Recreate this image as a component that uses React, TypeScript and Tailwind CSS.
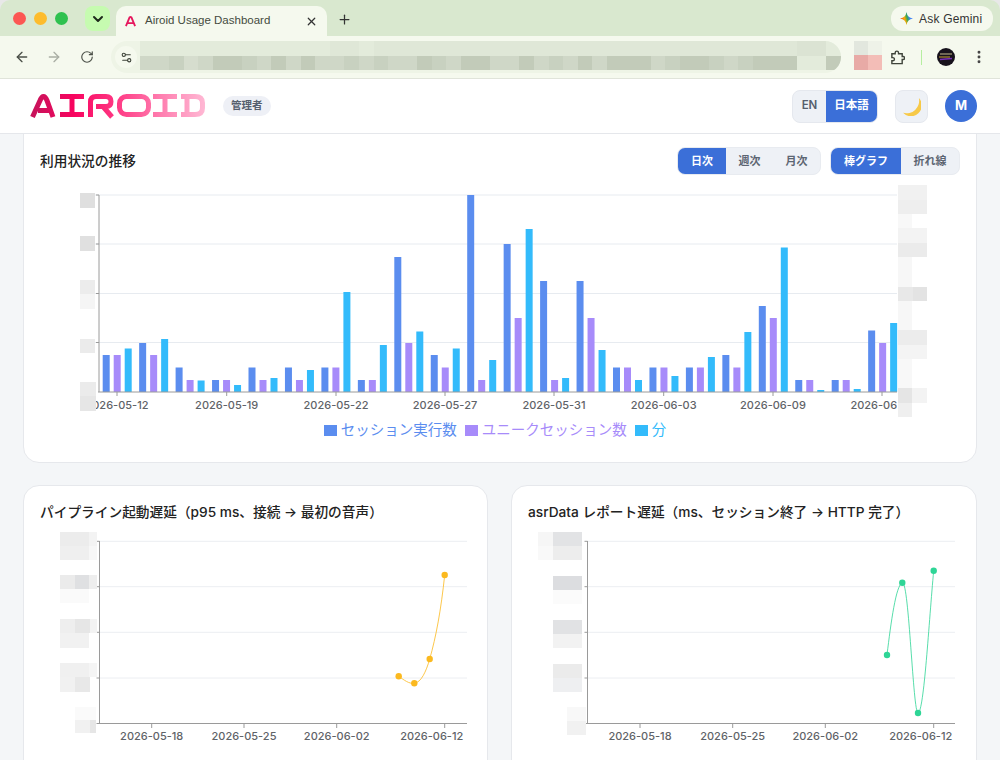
import { ArrowLeft, ArrowRight, ChevronDown, EllipsisVertical, Plus, RotateCw, Settings2, X } from 'lucide-react';

const BLUE = '#5b8def';
const PURPLE = '#a78bfa';
const CYAN = '#33bbfb';

// bar tops in page pixels: [sessions, unique, minutes]
const barTops = [
  [355, 355, 348.5], [343, 355, 339], [367.5, 380, 380.5], [380, 380, 385], [367.5, 380, 378],
  [367.5, 380, 370], [367.5, 367.5, 292], [380, 380, 345], [257, 343, 331.5], [355, 367.5, 348.5],
  [195, 380, 360], [244, 318, 229], [281, 380, 378], [281, 318, 350], [367.5, 367.5, 380],
  [367.5, 367.5, 376], [367.5, 367.5, 357], [355, 367.5, 332], [306, 318, 247.5], [380, 380, 390],
  [380, 380, 389], [330.5, 343, 323],
];

const mainTicks = [
  [117, '2026-05-12'], [226.7, '2026-05-19'], [336, '2026-05-22'], [445, '2026-05-27'],
  [554, '2026-05-31'], [663.7, '2026-06-03'], [773, '2026-06-09'], [882, '2026-06-12'],
] as const;

const urlTop = 'eeeeeeeeeeeeeddedddddddddddddddddddddddddddddcce';
const urlBottom = 'aa9ba889a8a8aa9a9aa89a88aa8a9a8a888a9889a9888ee8e';

const shade: Record<string, string> = {
  '8': '#c2cbb9', '9': '#c8d1c0', a: '#cfd7c7', b: '#d6ddce', c: '#dbe3d3', d: '#dfe7d7', e: '#e3ebdb',
};

type Cell = [number, number, number, number, string];

function Mosaic({ cells }: { cells: Cell[] }) {
  return (
    <g>
      {cells.map(([x, y, w, h, fill], i) => (
        <rect key={i} x={x} y={y} width={w} height={h} fill={fill} />
      ))}
    </g>
  );
}

const mainLeftBlur: Cell[] = [
  [80, 193, 15, 15, '#dfdfdf'], [80, 236, 15, 15, '#e0e0e0'], [80, 280, 15, 14, '#ececec'], [80, 294, 15, 15, '#f5f5f5'],
  [80, 339, 15, 14, '#ebebeb'], [80, 382, 16, 14, '#ebebeb'], [80, 396, 16, 15, '#e6e6e6'],
];

const mainRightBlur: Cell[] = [
  [898, 185, 29, 15, '#f1f1f1'], [898, 200, 29, 14, '#eeeeee'], [898, 214, 14, 14, '#f8f8f8'],
  [898, 228, 29, 15, '#f3f3f3'], [898, 243, 29, 14, '#ebebeb'], [898, 257, 14, 30, '#f7f7f7'],
  [898, 287, 15, 14, '#e8e8e8'], [913, 287, 14, 14, '#e3e3e3'], [898, 301, 14, 29, '#f7f7f7'],
  [898, 330, 29, 15, '#ececec'], [898, 345, 29, 14, '#f4f4f4'], [898, 359, 14, 29, '#f8f8f8'],
  [898, 388, 14, 15, '#e5e5e5'], [912, 388, 15, 15, '#f3f3f3'], [898, 403, 14, 14, '#efefef'],
];

const leftBlur: Cell[] = [
  [60, 532, 29, 14, '#ececec'], [89, 532, 8, 14, '#f3f3f3'], [60, 546, 29, 14, '#efefef'], [89, 546, 8, 14, '#f7f7f7'],
  [60, 575, 15, 14, '#ebebeb'], [75, 575, 14, 14, '#dfe0e2'], [89, 575, 8, 14, '#eeeeee'], [60, 589, 29, 14, '#fafafa'],
  [60, 619, 15, 14, '#eeeeee'], [75, 619, 15, 14, '#e6e6e6'], [90, 619, 7, 14, '#f3f3f3'], [60, 633, 29, 15, '#f1f1f1'],
  [60, 663, 29, 14, '#f0f0f0'], [89, 663, 8, 14, '#f5f5f5'], [60, 677, 15, 15, '#f1f1f1'], [75, 677, 15, 15, '#e8e8e8'],
  [75, 707, 21, 13, '#fafafa'], [75, 720, 15, 13, '#f1f1f1'], [90, 720, 6, 13, '#e6e6e6'],
];

const rightBlur: Cell[] = [
  [538, 532, 15, 14, '#f6f6f6'], [553, 532, 29, 14, '#e2e3e5'], [538, 546, 15, 14, '#f9f9f9'], [553, 546, 29, 14, '#ededed'],
  [553, 576, 29, 14, '#dcdde0'], [553, 590, 29, 14, '#fbfbfb'],
  [553, 620, 29, 14, '#e1e2e4'], [553, 634, 29, 14, '#f2f2f2'],
  [553, 664, 29, 14, '#ebebeb'], [553, 678, 29, 14, '#eeeff1'],
  [567, 707, 19, 14, '#f8f8f8'], [567, 721, 19, 14, '#f1f1f1'],
];

function MainChart() {
  return (
    <svg viewBox="24 180 952 240" className="block w-[952px] h-[240px]">
      {[195, 244, 293.5, 342.5].map((y) => (
        <line key={y} x1={95} x2={897} y1={y} y2={y} stroke="#e7ebf0" strokeWidth={1} />
      ))}
      {barTops.map((tops, i) => {
        const x = 102.7 + i * 36.45;
        return (
          <g key={i}>
            <rect x={x} y={tops[0]} width={7} height={392 - tops[0]} fill={BLUE} />
            <rect x={x + 11} y={tops[1]} width={7} height={392 - tops[1]} fill={PURPLE} />
            <rect x={x + 22} y={tops[2]} width={7} height={392 - tops[2]} fill={CYAN} />
          </g>
        );
      })}
      <line x1={99} x2={99} y1={195} y2={392} stroke="#9a9a9a" strokeWidth={1} />
      <line x1={98} x2={897} y1={392} y2={392} stroke="#9a9a9a" strokeWidth={1} />
      {[195, 244, 293.5, 342.5].map((y) => (
        <line key={y} x1={96} x2={99} y1={y} y2={y} stroke="#9a9a9a" strokeWidth={1} />
      ))}
      {mainTicks.map(([x, label]) => (
        <g key={label}>
          <line x1={x} x2={x} y1={392} y2={396} stroke="#9a9a9a" strokeWidth={1} />
          <text x={x} y={408.5} textAnchor="middle" fontSize={11} fontWeight={500} fill="#5f6368">
            {label}
          </text>
        </g>
      ))}
      <rect x={897} y={392} width={60} height={28} fill="#fff" />
      <Mosaic cells={mainLeftBlur} />
      <Mosaic cells={mainRightBlur} />
    </svg>
  );
}

interface LineChartProps {
  x0: number;
  ticks: readonly (readonly [number, string])[];
  points: readonly (readonly [number, number])[];
  path: string;
  color: string;
  blur: Cell[];
}

function LineChart({ x0, ticks, points, path, color, blur }: LineChartProps) {
  const axis = x0 + 75.5;
  const end = x0 + 443;
  return (
    <svg viewBox={`${x0} 530 464 230`} className="block w-[464px] h-[230px]">
      {[541.3, 586.7, 632.3, 678].map((y) => (
        <g key={y}>
          <line x1={axis} x2={end} y1={y} y2={y} stroke="#eceef2" strokeWidth={1} />
          <line x1={axis - 3} x2={axis} y1={y} y2={y} stroke="#9a9a9a" strokeWidth={1} />
        </g>
      ))}
      <line x1={axis} x2={axis} y1={541} y2={723.5} stroke="#9a9a9a" strokeWidth={1} />
      <line x1={axis - 3} x2={end} y1={723.5} y2={723.5} stroke="#9a9a9a" strokeWidth={1} />
      {ticks.map(([x, label], i) => (
        <g key={label}>
          <line x1={x} x2={x} y1={723.5} y2={728} stroke="#9a9a9a" strokeWidth={1} />
          <text x={i === ticks.length - 1 ? x - 13 : x} y={739.5} textAnchor="middle" fontSize={11} fontWeight={500} fill="#5f6368">
            {label}
          </text>
        </g>
      ))}
      <path d={path} fill="none" stroke={color} strokeOpacity={0.8} strokeWidth={1} />
      {points.map(([x, y]) => (
        <circle key={x} cx={x} cy={y} r={3.2} fill={color} />
      ))}
      <Mosaic cells={blur} />
    </svg>
  );
}

function Logo() {
  return (
    <svg viewBox="30 94 176 26" className="w-[176px] h-[26px]">
      <defs>
        <linearGradient id="logo" gradientUnits="userSpaceOnUse" x1={30} y1={0} x2={205} y2={0}>
          <stop offset="0" stopColor="#c4145a" />
          <stop offset="0.25" stopColor="#f8045f" />
          <stop offset="0.5" stopColor="#ff3a85" />
          <stop offset="0.75" stopColor="#ff7fb0" />
          <stop offset="1" stopColor="#ffb8d4" />
        </linearGradient>
      </defs>
      <g fill="none" stroke="url(#logo)" strokeWidth={5}>
        <path d="M32.5 118 L40 101.5 Q41.5 97.5 43.5 97.5 Q45.5 97.5 47 101.5 L53 118 M38 111.5 H50" />
        <path d="M60 97.5 H84 M60 115.5 H84 M72 97.5 V115.5" />
        <path d="M90.5 118 V103 Q90.5 97.5 96 97.5 H106 Q111 97.5 111 102.5 Q111 107.5 106 107.5 H96 M103 107.5 L112 118" />
        <rect x={119.5} y={97.5} width={29} height={18} rx={7} />
        <path d="M153 97.5 H177 M153 115.5 H177 M165 97.5 V115.5" />
        <path d="M181 97.5 H195 Q202.5 97.5 202.5 104 V109 Q202.5 115.5 195 115.5 H181 M187 97.5 V115.5" />
      </g>
    </svg>
  );
}

function BrowserChrome() {
  return (
    <div className="shrink-0 font-['Liberation_Sans',sans-serif]">
      <div className="h-9 bg-[#d9e8cf] flex items-end rounded-t-[10px]">
        <div className="flex items-center gap-2 h-9 pl-[13px] w-[85px]">
          <span className="w-[13px] h-[13px] rounded-full bg-[#fc5753]" />
          <span className="w-[13px] h-[13px] rounded-full bg-[#fdbc2c]" />
          <span className="w-[13px] h-[13px] rounded-full bg-[#2fc14f]" />
        </div>
        <div className="w-[25px] h-[25px] mb-[5px] rounded-lg bg-[#c6fbb0] flex items-center justify-center">
          <ChevronDown className="w-4 h-4 text-[#1f2a1c]" strokeWidth={3} />
        </div>
        <div className="ml-[6px] w-[211px] h-[30px] rounded-t-[10px] bg-[#f5f9ee] flex items-center pl-[9px] pr-[9px]">
          <svg viewBox="0 0 12 12" className="w-[11px] h-[11px] shrink-0">
            <path d="M1 11 L5 1.5 Q6 0.5 7 1.5 L11 11 M3.5 7.8 H8.5" fill="none" stroke="#e5185d" strokeWidth={2} />
          </svg>
          <span className="ml-[9px] text-[11.5px] text-[#444b40] whitespace-nowrap">Airoid Usage Dashboard</span>
          <X className="w-[13px] h-[13px] ml-auto text-[#333]" strokeWidth={2.2} />
        </div>
        <Plus className="w-[15px] h-[15px] ml-[10px] mb-[9px] text-[#333]" strokeWidth={2} />
        <div className="ml-auto mr-[7px] mb-[5px] w-[102px] h-[25px] rounded-xl bg-[#f5f9ee] flex items-center pl-[9px] gap-[6px]">
          <svg viewBox="0 0 16 16" className="w-[13px] h-[13px] shrink-0">
            <defs>
              <linearGradient id="gem" x1="0" y1="0.6" x2="1" y2="0.3">
                <stop offset="0" stopColor="#ea4335" />
                <stop offset="0.35" stopColor="#f9ab00" />
                <stop offset="0.55" stopColor="#34a853" />
                <stop offset="0.72" stopColor="#4285f4" />
              </linearGradient>
            </defs>
            <path d="M8 0 Q9 7 16 8 Q9 9 8 16 Q7 9 0 8 Q7 7 8 0Z" fill="url(#gem)" />
          </svg>
          <span className="text-[12px] tracking-[0.2px] text-[#333] whitespace-nowrap">Ask Gemini</span>
        </div>
      </div>
      <div className="h-[43px] bg-[#f5f9ee] border-b border-[#e0e4da] flex items-center">
        <ArrowLeft className="w-4 h-4 ml-[14px] text-[#4b5048]" />
        <ArrowRight className="w-4 h-4 ml-4 text-[#a9aea4]" />
        <RotateCw className="w-[14px] h-[14px] ml-[18px] text-[#4b5048]" />
        <div className="ml-[17px] h-[32px] w-[730px] rounded-full bg-[#eef4e6] flex items-start pl-[4px] overflow-hidden">
          <div className="mt-[5px] w-[22px] h-[22px] rounded-full bg-[#f5f9ee] flex items-center justify-center shrink-0">
            <Settings2 className="w-[13px] h-[13px] text-[#3c4238]" />
          </div>
          <div className="ml-[3px] flex flex-col">
            {[urlTop, urlBottom].map((row, r) => (
              <div key={r} className="flex h-[14.5px]">
                {row.split('').map((c, i) => (
                  <span key={i} className="w-[14.6px] h-full" style={{ backgroundColor: shade[c] }} />
                ))}
              </div>
            ))}
          </div>
        </div>
        <div className="ml-[13px] mb-[4px] grid grid-cols-2 w-[28px] h-[29px]">
          <span className="bg-[#e2e7de]" />
          <span className="bg-[#eef2e8]" />
          <span className="bg-[#e8aaa6]" />
          <span className="bg-[#f3bdb7]" />
        </div>
        <svg viewBox="0 0 16 16" className="w-[15px] h-[15px] ml-[8px]">
          <path
            d="M2 4 H5.5 V3 a1.8 1.8 0 0 1 3.6 0 V4 H13 V7 H14 a1.6 1.6 0 0 1 0 3.2 H13 V14.5 H2 V11.5 H3 a1.7 1.7 0 0 0 0-3.4 H2 Z"
            fill="none"
            stroke="#3f443b"
            strokeWidth={1.5}
          />
        </svg>
        <span className="ml-[16px] w-[1px] h-[15px] bg-[#b6eea0]" />
        <svg viewBox="0 0 18 18" className="ml-[15px] w-[18px] h-[18px]">
          <circle cx={9} cy={9} r={9} fill="#17121c" />
          <path d="M3 6 H15" stroke="#8c8468" strokeWidth={1.5} />
          <path d="M2 9 H13" stroke="#c9a23a" strokeWidth={1} />
          <path d="M3 11.5 L15 10.5" stroke="#7a2fb8" strokeWidth={1.5} />
        </svg>
        <EllipsisVertical className="w-4 h-4 ml-[16px] text-[#444]" strokeWidth={2.4} />
      </div>
    </div>
  );
}

function AppHeader() {
  return (
    <header className="relative z-10 shrink-0 h-[55px] bg-white border-b border-[#e5e7eb] flex items-center pl-[30px] pr-[23px]">
      <Logo />
      <span className="ml-[17px] h-5 px-[8px] rounded-full bg-[#eef0f6] text-[10.5px] font-semibold text-[#55606e] flex items-center">管理者</span>
      <div className="ml-auto flex h-[33px] rounded-lg border border-[#e5e8ee] bg-[#eef1f6] overflow-hidden text-[11.5px] font-semibold">
        <span className="w-[33px] flex items-center justify-center text-[#555e6c]">EN</span>
        <span className="w-[51px] flex items-center justify-center bg-[#3b6fd8] text-white">日本語</span>
      </div>
      <div className="ml-[17px] w-[33px] h-[33px] rounded-lg border border-[#e5e8ee] bg-[#eef1f6] flex items-center justify-center">
        <svg viewBox="0 0 18 18" className="w-[19px] h-[19px]">
          <path d="M16 1 A10 10 0 0 1 1 15 A12 12 0 0 0 16 1Z" fill="#f7c948" />
        </svg>
      </div>
      <div className="ml-[17px] w-8 h-8 rounded-full bg-[#3b6fd8] text-white text-[13px] font-bold flex items-center justify-center">M</div>
    </header>
  );
}

function Segmented({ items, widths }: { items: string[]; widths: string[] }) {
  return (
    <div className="flex h-[28px] rounded-lg border border-[#e8ebf0] bg-[#eef1f6] overflow-hidden text-[11px] font-semibold">
      {items.map((item, i) => (
        <span
          key={item}
          className={`${widths[i]} flex items-center justify-center ${i === 0 ? 'bg-[#3b6fd8] text-white' : 'text-[#5c6572]'}`}
        >
          {item}
        </span>
      ))}
    </div>
  );
}

export default function App() {
  return (
    <div className="w-[1000px] h-[760px] overflow-hidden flex flex-col bg-[#e8e8e8] font-['Inter','Noto_Sans_CJK_JP',sans-serif]">
      <BrowserChrome />
      <AppHeader />
      <main className="flex-1 min-h-0 overflow-hidden bg-[#f4f6f8] px-[23px] flex flex-col gap-[22px]">
        <section className="shrink-0 -mt-4 bg-white rounded-2xl border border-[#e6e8ec] pt-[28px] h-[345px]">
          <div className="flex items-center pl-[16px] pr-[16px]">
            <h2 className="text-[13.7px] font-medium text-[#222]">利用状況の推移</h2>
            <div className="ml-auto flex gap-[9px]">
              <Segmented items={['日次', '週次', '月次']} widths={['w-[48px]', 'w-[47px]', 'w-[47px]']} />
              <Segmented items={['棒グラフ', '折れ線']} widths={['w-[70px]', 'w-[58px]']} />
            </div>
          </div>
          <div className="mt-[5px]">
            <MainChart />
          </div>
          <div className="mt-[1px] pr-[10px] flex items-center justify-center gap-[4px] text-[14.5px] leading-[18px]">
            <span className="w-[13px] h-[11px] bg-[#5b8def]" />
            <span className="text-[#5b8def] mr-[4px]">セッション実行数</span>
            <span className="w-[13px] h-[11px] bg-[#a78bfa]" />
            <span className="text-[#a78bfa] mr-[4px]">ユニークセッション数</span>
            <span className="w-[13px] h-[11px] bg-[#33bbfb]" />
            <span className="text-[#33bbfb]">分</span>
          </div>
        </section>
        <div className="grid grid-cols-[465px_466px] gap-[23px]">
          <section className="bg-white rounded-2xl border border-[#e6e8ec] h-[300px]">
            <h2 className="pl-[16px] pt-[16px] h-[44px] text-[13.7px] font-medium text-[#222] whitespace-nowrap">パイプライン起動遅延（p95 ms、接続 → 最初の音声）</h2>
            <LineChart
              x0={24}
              color="#fbb91f"
              ticks={[[151.7, '2026-05-18'], [244, '2026-05-25'], [336.7, '2026-06-02'], [444.7, '2026-06-12']]}
              points={[[398.7, 676.3], [414.3, 683.3], [429.7, 659], [444.7, 575]]}
              path="M398.7 676.3 C404 680, 409 684, 414.3 683.3 C421 682.5, 426 672, 429.7 659 C436 637, 441 610, 444.7 575"
              blur={leftBlur}
            />
          </section>
          <section className="bg-white rounded-2xl border border-[#e6e8ec] h-[300px]">
            <h2 className="pl-[16px] pt-[16px] h-[44px] text-[13.7px] font-medium text-[#222] whitespace-nowrap">asrData レポート遅延（ms、セッション終了 → HTTP 完了）</h2>
            <LineChart
              x0={512}
              color="#2ed596"
              ticks={[[640, '2026-05-18'], [732.7, '2026-05-25'], [825.3, '2026-06-02'], [933.7, '2026-06-12']]}
              points={[[887, 655], [902.3, 582.7], [918, 713], [933.7, 570.7]]}
              path="M887 655 C891 622, 896 585, 902.3 582.7 C909 580, 913 713, 918 713 C924 713, 929 620, 933.7 570.7"
              blur={rightBlur}
            />
          </section>
        </div>
      </main>
    </div>
  );
}
